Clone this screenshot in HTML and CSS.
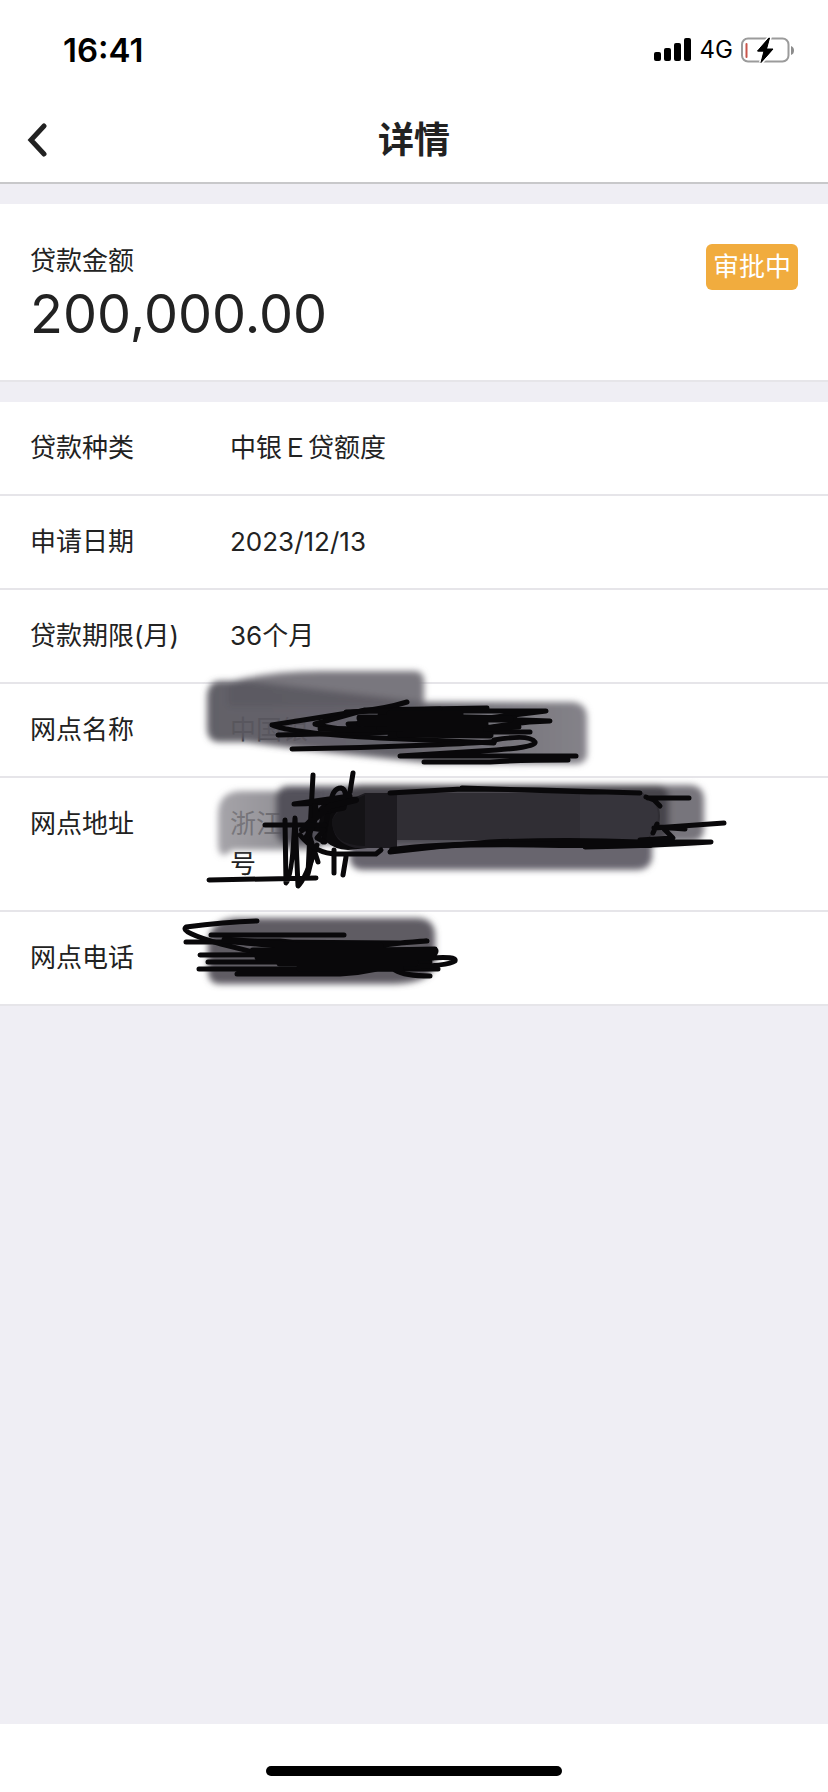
FILE: index.html
```html
<!DOCTYPE html>
<html lang="zh-CN">
<head>
<meta charset="utf-8">
<meta name="viewport" content="width=device-width, initial-scale=1">
<title>详情</title>
<link rel="stylesheet" href="styles.css">
</head>
<body>
<div class="status-bar">
  <time class="clock">16:41</time>
  <div class="indicators">
    <svg class="signal" viewBox="0 0 38 24" aria-hidden="true">
      <rect x="0" y="14" width="7" height="9" rx="2"/>
      <rect x="10" y="10" width="7" height="13" rx="2"/>
      <rect x="20" y="5" width="7" height="18" rx="2"/>
      <rect x="30" y="0" width="7" height="23" rx="2"/>
    </svg>
    <span class="network">4G</span>
    <svg class="battery" viewBox="0 0 54 26" aria-hidden="true">
      <rect x="1" y="1.500" width="46.500" height="23" rx="6" fill="none" stroke="#9b9b9b" stroke-width="2"/>
      <path d="M50 9q3 1 3 4.500t-3 4.500z" fill="#8c8c8c"/>
      <rect x="4.500" y="6" width="2" height="15" rx="1" fill="#c8544a"/>
      <path d="M28 1L16.500 14.500H23L20 25.500L32 12H25.500L28.500 1z" fill="#000" stroke="#fff" stroke-width="4" paint-order="stroke"/>
      <path d="M27.800 1L16.500 14H23L20 25.500L32 12H25.500L28.500 1z" stroke="#000" stroke-linejoin="round"/>
    </svg>
  </div>
</div>
<header class="nav">
  <button class="back" type="button" aria-label="返回">
    <svg viewBox="0 0 20 34" aria-hidden="true"><path d="M17 3L4 17L17 31"/></svg>
  </button>
  <h1 class="title">详情</h1>
</header>
<main class="content">
  <section class="summary">
    <div>
      <div class="summary-label">贷款金额</div>
      <div class="amount">200,000.00</div>
    </div>
    <span class="badge">审批中</span>
  </section>
  <section class="details">
    <dl class="list">
      <div class="row"><dt>贷款种类</dt><dd>中银Ｅ贷额度</dd></div>
      <div class="row"><dt>申请日期</dt><dd>2023/12/13</dd></div>
      <div class="row"><dt>贷款期限(月)</dt><dd>36个月</dd></div>
      <div class="row"><dt>网点名称</dt><dd>中国银</dd></div>
      <div class="row"><dt>网点地址</dt><dd>浙江<br>号</dd></div>
      <div class="row"><dt>网点电话</dt><dd></dd></div>
    </dl>
    <svg class="ink" viewBox="0 402 828 604" aria-hidden="true">
      <defs>
        <filter id="soft" x="-10%" y="-20%" width="120%" height="140%"><feGaussianBlur stdDeviation="3"/></filter>
        <linearGradient id="fade" x1="0" x2="1"><stop offset="0" stop-color="#5a5860"/><stop offset=".5" stop-color="#5d5b63"/><stop offset="1" stop-color="#7e7c83"/></linearGradient>
        <linearGradient id="tint" x1="0" x2="1"><stop offset="0" stop-color="#929096"/><stop offset="1" stop-color="#6d6b72"/></linearGradient>
      </defs>

      <!-- branch name -->
      <g filter="url(#soft)">
        <path d="M228 682Q270 671 320 671H414Q424 671 424 682V706H228z" fill="#79777e"/>
        <path d="M219 681H250L424 702H572Q587 703 587 718V756Q584 765 574 764L430 763Q320 752 245 742H218Q207 741 207 728V696Q208 682 219 681z" fill="url(#fade)" opacity=".95"/>
      </g>
      <g class="pen">
        <path d="M407 702Q385 709 354 712L272 725Q290 733 380 738L494 743"/>
        <path d="M278 735L400 732H530M292 749Q360 748 430 745T494 741"/>
        <path d="M315 724L365 710L487 708M315 724Q340 732 390 730L546 711H390"/>
        <path d="M346 712L440 709M348 724L515 718L380 715L550 721Q510 722 460 733L320 729L519 727L390 736"/>
        <path d="M494 740Q530 734 535 742Q537 748 480 751L400 756H576M424 762H490Q520 760 568 760"/>
        <path d="M360 718L510 719M360 723L485 724M380 728L480 730M390 714L460 714M400 734L490 735" stroke-width="7"/>
      </g>

      <!-- branch address -->
      <g filter="url(#soft)">
        <path d="M240 791H320V850H232Q219 862 218 845V815Q218 792 240 791z" fill="url(#tint)" opacity=".82"/>
        <path d="M350 835H652V858Q650 870 636 870H362Q350 869 350 858z" fill="#67656e"/>
        <path d="M640 785H690Q704 786 704 800V828Q704 842 690 842H640z" fill="#77757c"/>
        <rect x="276" y="786" width="130" height="58" rx="12" fill="#504e56" opacity=".95"/>
        <rect x="348" y="785" width="321" height="58" rx="12" fill="#46444c"/>
      </g>
      <path d="M350 797Q322 798 319 823Q320 848 348 850L397 845V794z" fill="#0b0a0c"/>
      <path d="M397 793H642Q660 800 660 816Q660 836 642 840H397z" fill="#302e34"/>
      <path d="M580 793H642Q658 800 658 816Q658 836 640 840H580z" fill="#36343b"/>
      <path d="M365 793H397V848H355Q332 843 332 820Q338 804 365 793z" fill="#1d1b20"/>
      <path d="M365 795V846Q332 846 332 820Q340 805 365 795z" fill="#141316"/>
      <g class="pen">
        <path d="M390 793L462 789L540 790L640 793M462 788L590 792"/>
        <path d="M646 797L654 800L660 806M648 798H689M654 828L724 823M657 827L685 829M664 829L673 838L640 840M657 824L653 833"/>
        <path d="M390 852Q440 846 490 842Q570 839 640 842H711Q650 846 585 847"/>
        <path d="M392 850Q450 842 560 845H650" stroke-width="6"/>
        <path d="M313 775L310 832L308 874L314 850L318 862L306 825L330 800L323 842"/>
        <path d="M353 773L350 792Q344 804 294 804L350 796M330 806Q332 788 341 788Q348 789 344 808L318 813L310 828L324 830L317 838L325 842"/>
        <path d="M302 830L330 806L356 800M306 838Q318 820 315 806" stroke-width="6"/>
        <path d="M265 825H325M285 820L286 883Q292 880 295 818L298 886Q305 880 317 845M209 880L316 878"/>
        <path d="M300 835Q316 855 340 854H376L381 850M334 850V873M343 875L346 857"/>
      </g>

      <!-- branch phone -->
      <g filter="url(#soft)">
        <path d="M236 918H418Q435 919 435 936V962Q435 982 395 984H220Q208 984 208 970V942Q210 920 236 918z" fill="#5e5c64"/>
      </g>
      <g class="pen">
        <path d="M257 921Q225 922 186 927Q179 932 221 944L265 955L430 962"/>
        <path d="M211 935H344M186 942H260L400 943L427 941Q400 942 360 949L280 941H225L330 951L435 949"/>
        <path d="M200 955L435 954M208 962H415M199 969H438M237 974H340Q380 972 415 958"/>
        <path d="M430 958Q457 956 455 961Q448 966 405 967M395 970Q405 976 430 976"/>
        <path d="M225 940L300 946H380M253 951H435M258 957H432M280 963H415M300 968H400" stroke-width="7"/>
      </g>
    </svg>
  </section>
</main>
<footer class="home-area"><div class="home-bar"></div></footer>
</body>
</html>
```
FILE: styles.css
```css
* {
  box-sizing: border-box;
}

body {
  margin: 0;
  min-height: 100vh;
  display: flex;
  flex-direction: column;
  background: #efeef4;
  color: #222;
  font-family: Inter, "Noto Sans CJK SC", sans-serif;
  font-size: 26px;
  line-height: 40px;
}

.status-bar {
  height: 98px;
  padding: 2px 33px 0 63px;
  display: flex;
  align-items: center;
  justify-content: space-between;
  background: #fff;
  color: #000;
}

.clock {
  font-size: 33px;
  font-weight: 600;
}

.indicators {
  display: flex;
  align-items: center;
  gap: 8px;
}

.signal {
  width: 38px;
  height: 24px;
}

.network {
  font-size: 24px;
}

.battery {
  width: 54px;
  height: 26px;
}

.nav {
  height: 86px;
  padding: 0 24px;
  display: grid;
  grid-template-columns: 60px 1fr 60px;
  align-items: center;
  background: #fff;
  border-bottom: 2px solid #c8c8ca;
}

.back {
  width: 60px;
  height: 60px;
  padding: 0 3px;
  display: flex;
  align-items: center;
  background: none;
  border: 0;
}

.back svg {
  width: 20px;
  height: 34px;
  fill: none;
  stroke: #222;
  stroke-width: 5;
  stroke-linecap: round;
}

.title {
  margin: 0;
  font-size: 36px;
  font-weight: 600;
  text-align: center;
}

.content {
  flex: 1;
  padding-top: 20px;
  display: flex;
  flex-direction: column;
  gap: 20px;
}

.summary {
  padding: 40px 30px 30px;
  display: flex;
  align-items: flex-start;
  justify-content: space-between;
  background: #fff;
  border-bottom: 2px solid #e6e5e9;
}

.summary-label {
  line-height: 34px;
}

.amount {
  font-size: 54px;
  line-height: 72px;
}

.badge {
  padding: 0 7px;
  border-radius: 6px;
  background: #f1ac3e;
  color: #fff;
  line-height: 46px;
}

.details {
  position: relative;
}

.list {
  margin: 0;
  background: #fff;
}

.row {
  min-height: 94px;
  padding: 26px 30px;
  display: grid;
  grid-template-columns: 200px 1fr;
  border-bottom: 2px solid #e6e5e9;
}

.row dd {
  margin: 0;
}

.ink {
  position: absolute;
  top: 0;
  left: 0;
  width: 828px;
  height: 604px;
  pointer-events: none;
}

.pen {
  fill: none;
  stroke: #09080a;
  stroke-width: 5;
  stroke-linecap: round;
  stroke-linejoin: round;
}

.home-area {
  height: 68px;
  padding-bottom: 16px;
  display: flex;
  align-items: flex-end;
  justify-content: center;
  background: #fff;
}

.home-bar {
  width: 296px;
  height: 10px;
  border-radius: 5px;
  background: #000;
}
```
